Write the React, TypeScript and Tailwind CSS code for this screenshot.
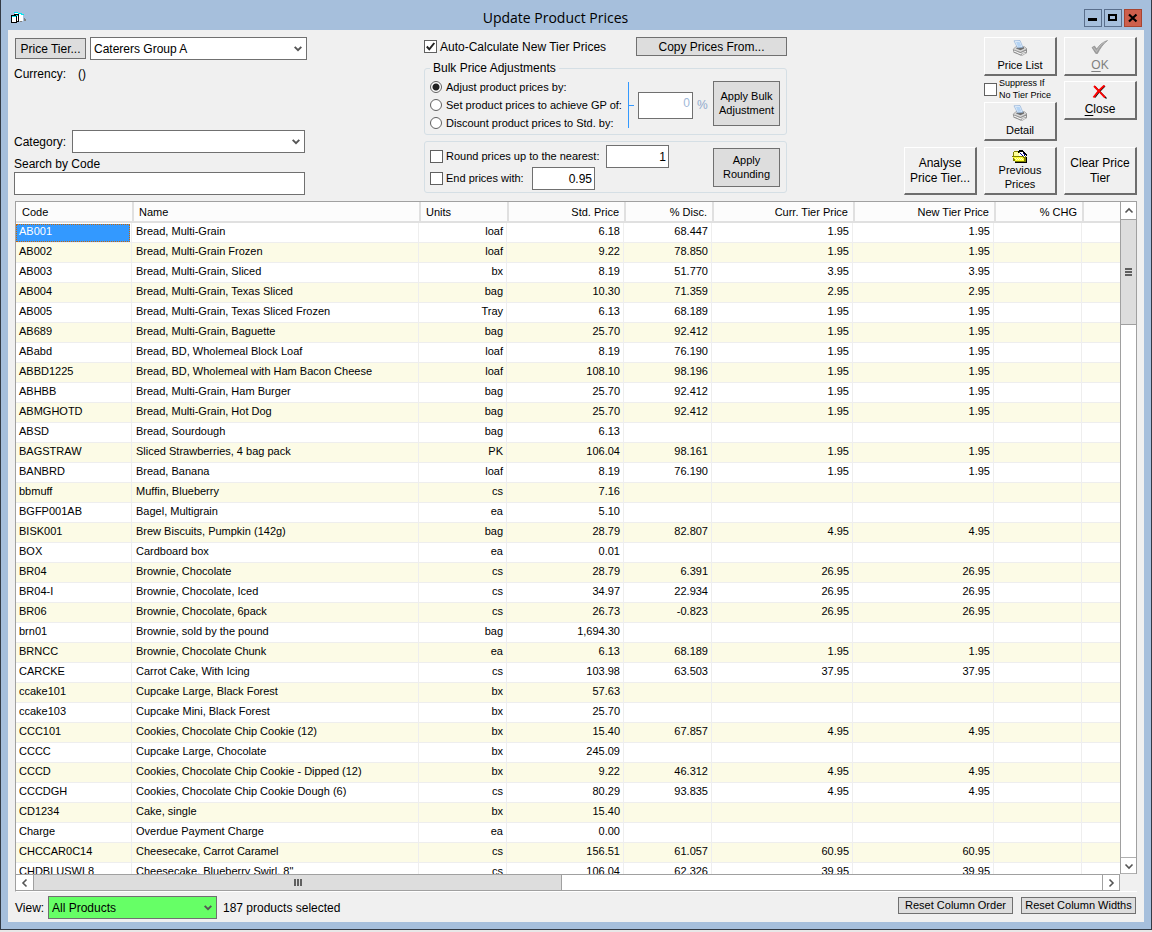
import { ReactNode, useState } from 'react';
import clsx from 'clsx';

interface Product {
  code: string;
  name: string;
  units: string;
  std: string;
  disc?: string;
  curr?: string;
  next?: string;
}

const p = (code: string, name: string, units: string, std: string, disc = '', tier = ''): Product => ({
  code, name, units, std, disc, curr: tier, next: tier,
});

const products: Product[] = [
  p('AB001', 'Bread, Multi-Grain', 'loaf', '6.18', '68.447', '1.95'),
  p('AB002', 'Bread, Multi-Grain Frozen', 'loaf', '9.22', '78.850', '1.95'),
  p('AB003', 'Bread, Multi-Grain, Sliced', 'bx', '8.19', '51.770', '3.95'),
  p('AB004', 'Bread, Multi-Grain, Texas Sliced', 'bag', '10.30', '71.359', '2.95'),
  p('AB005', 'Bread, Multi-Grain, Texas Sliced Frozen', 'Tray', '6.13', '68.189', '1.95'),
  p('AB689', 'Bread, Multi-Grain, Baguette', 'bag', '25.70', '92.412', '1.95'),
  p('ABabd', 'Bread, BD, Wholemeal Block Loaf', 'loaf', '8.19', '76.190', '1.95'),
  p('ABBD1225', 'Bread, BD, Wholemeal with Ham Bacon Cheese', 'loaf', '108.10', '98.196', '1.95'),
  p('ABHBB', 'Bread, Multi-Grain, Ham Burger', 'bag', '25.70', '92.412', '1.95'),
  p('ABMGHOTD', 'Bread, Multi-Grain, Hot Dog', 'bag', '25.70', '92.412', '1.95'),
  p('ABSD', 'Bread, Sourdough', 'bag', '6.13'),
  p('BAGSTRAW', 'Sliced Strawberries, 4 bag pack', 'PK', '106.04', '98.161', '1.95'),
  p('BANBRD', 'Bread, Banana', 'loaf', '8.19', '76.190', '1.95'),
  p('bbmuff', 'Muffin, Blueberry', 'cs', '7.16'),
  p('BGFP001AB', 'Bagel, Multigrain', 'ea', '5.10'),
  p('BISK001', 'Brew Biscuits, Pumpkin (142g)', 'bag', '28.79', '82.807', '4.95'),
  p('BOX', 'Cardboard box', 'ea', '0.01'),
  p('BR04', 'Brownie, Chocolate', 'cs', '28.79', '6.391', '26.95'),
  p('BR04-I', 'Brownie, Chocolate, Iced', 'cs', '34.97', '22.934', '26.95'),
  p('BR06', 'Brownie, Chocolate, 6pack', 'cs', '26.73', '-0.823', '26.95'),
  p('brn01', 'Brownie, sold by the pound', 'bag', '1,694.30'),
  p('BRNCC', 'Brownie, Chocolate Chunk', 'ea', '6.13', '68.189', '1.95'),
  p('CARCKE', 'Carrot Cake, With Icing', 'cs', '103.98', '63.503', '37.95'),
  p('ccake101', 'Cupcake Large, Black Forest', 'bx', '57.63'),
  p('ccake103', 'Cupcake Mini, Black Forest', 'bx', '25.70'),
  p('CCC101', 'Cookies, Chocolate Chip Cookie (12)', 'bx', '15.40', '67.857', '4.95'),
  p('CCCC', 'Cupcake Large, Chocolate', 'bx', '245.09'),
  p('CCCD', 'Cookies, Chocolate Chip Cookie - Dipped (12)', 'bx', '9.22', '46.312', '4.95'),
  p('CCCDGH', 'Cookies, Chocolate Chip Cookie Dough (6)', 'cs', '80.29', '93.835', '4.95'),
  p('CD1234', 'Cake, single', 'bx', '15.40'),
  p('Charge', 'Overdue Payment Charge', 'ea', '0.00'),
  p('CHCCAR0C14', 'Cheesecake, Carrot Caramel', 'cs', '156.51', '61.057', '60.95'),
  p('CHDBLUSWL8', 'Cheesecake, Blueberry Swirl, 8"', 'cs', '106.04', '62.326', '39.95'),
];

const columns = [
  { label: 'Code', width: 'w-[116px]' },
  { label: 'Name', width: 'w-[287px]' },
  { label: 'Units', width: 'w-[88px]' },
  { label: 'Std. Price', width: 'w-[117px]', right: true },
  { label: '% Disc.', width: 'w-[88px]', right: true },
  { label: 'Curr. Tier Price', width: 'w-[141px]', right: true },
  { label: 'New Tier Price', width: 'w-[141px]', right: true },
  { label: '% CHG', width: 'w-[88px]', right: true },
  { label: '', width: '' },
];

function PrinterIcon() {
  return (
    <svg width="16" height="16" viewBox="0 0 16 16" aria-hidden="true">
      <path d="M1 9.500 4 6.500l8.500.2 2.500 2.300v3.500L9 15.800 1.500 12.500z" fill="#8a8a8a" />
      <path d="M1 9.500 4 6.500l8.500.2L15 9l-6.500 3.300z" fill="#d8d8d8" stroke="#8a8a8a" strokeWidth=".5" />
      <path d="M4 8.600 6 6.800l5.700.2.5 1.500-3.700 1.700z" fill="#6d6d6d" />
      <path d="M2 .8 8 .5l2.800 6.700-5.300.6z" fill="#e6f1fc" stroke="#8fb0d8" strokeWidth=".7" />
      <path d="m4 2 3.500-.2 2 4.700-3.500.5z" fill="#b4d3f3" />
      <path d="M2 11 8.500 13.800l5.500-2.500" stroke="#f4f4f4" strokeWidth="1.100" fill="none" />
      <path d="m9 14 4-1.800 1.500.8-4.500 2.500z" fill="#ececec" stroke="#777" strokeWidth=".4" />
    </svg>
  );
}

function TickIcon() {
  return (
    <svg width="18" height="14" viewBox="0 0 18 14" aria-hidden="true">
      <path d="M1 7.500 3.500 6l2.200 3C8.500 5 11.500 2 16.500.5 12 4 9 8.500 6.500 13.500H4.800z" fill="#a0a0a0" stroke="#858585" strokeWidth=".6" />
      <path d="m2.500 7.500 3 4C8 7 10.500 4 14 1.800" fill="none" stroke="#c4c4c4" strokeWidth=".8" />
    </svg>
  );
}

function CrossIcon() {
  return (
    <svg width="16" height="14" viewBox="0 0 16 14" aria-hidden="true">
      <path d="M3 1.500C6 5 10 9 14.500 13.500M13 1 8 6 3 12.500" fill="none" stroke="#111" strokeWidth="1.200" />
      <path d="M2 1C5 4 9 8.500 13 12.500" fill="none" stroke="#f00" strokeWidth="1.800" />
      <path d="M12.500.5C8.500 3.500 5 7.500 1.500 12.500" fill="none" stroke="#f00" strokeWidth="2" />
    </svg>
  );
}

function FolderIcon() {
  return (
    <svg width="16" height="14" viewBox="0 0 16 14" aria-hidden="true" shapeRendering="crispEdges">
      <path d="M1 3h1V2h4v1h7v4h1v6H3v-1H1z" fill="#808000" />
      <path d="M2 3h4v1h1v3H2z" fill="#ffff99" />
      <path d="M7 4 9 2l5 4-1 2H7z" fill="#fff" />
      <path d="M6 2h1V1h4v1h1v1h1v1h1v1h1v2h-1V6h-1V5h-1V4h-1V3H7v1H6z" fill="#000" />
      <path d="M8 4h1v1h1v1h1v1h-1V6H9V5H8zM11 4h1v1h1v2h-1V5h-1z" fill="#00008b" />
      <path d="M0 7h12v1h1v4h1v1H3v-1H2v-2H1V8H0z" fill="#808000" />
      <path d="M1 8h10v1h1v3H3v-2H2V9H1z" fill="#ffff33" />
      <path d="M3 9h1v1H3zM5 9h1v1H5zM7 9h1v1H7zM9 9h1v1H9zM4 10h1v1H4zM6 10h1v1H6zM8 10h1v1H8zM10 10h1v1h-1z" fill="#ffffcc" />
      <path d="M14 8h1v6H3v-1h11z" fill="#000" />
    </svg>
  );
}

function AppIcon() {
  return (
    <svg className="shrink-0" width="17" height="14" viewBox="0 0 17 14" aria-hidden="true" shapeRendering="crispEdges">
      <path d="M5 2h5v1h3v7H8V4H5z" fill="#fff" />
      <path d="M4 1h4v1h4v1h2v1h-3V3H8V2H4z" fill="#00e5f0" />
      <path d="M14 7h1v1h1v2h-2zM10 10h2v1h-2z" fill="#808080" />
      <path d="M4.500 3.500h4v7h-4z" fill="#fff" stroke="#000" />
      <path d="M5 4h3v1H5z" fill="#00e5f0" />
      <path d="M1.500 5.500h5v6h-5z" fill="#fff" stroke="#000" />
      <path d="M1 4h5v1H1z" fill="#000" />
      <path d="M2 5h4v1H2z" fill="#00e5f0" />
    </svg>
  );
}

function Chevron({ dir }: { dir: 'up' | 'down' | 'left' | 'right' }) {
  const d = {
    up: 'M1.500 6.500 5 3l3.500 3.500',
    down: 'M1.500 3.500 5 7l3.500-3.500',
    left: 'M6.500 1.500 3 5l3.500 3.500',
    right: 'M3.500 1.500 7 5 3.500 8.500',
  }[dir];
  return (
    <svg width="10" height="10" viewBox="0 0 10 10" aria-hidden="true">
      <path d={d} fill="none" stroke="#555" strokeWidth="1.600" />
    </svg>
  );
}

function Select({ id, label, options, className }: { id: string; label: string; options: string[]; className?: string }) {
  return (
    <div className={clsx('relative h-[23px] border border-[#707070]', className)}>
      <select id={id} aria-label={label} className="block h-full w-full appearance-none bg-transparent pl-[3px] pr-4 text-xs outline-none">
        {options.map((o) => <option key={o}>{o}</option>)}
      </select>
      <svg className="pointer-events-none absolute right-1 top-2" width="8" height="6" viewBox="0 0 8 6" aria-hidden="true">
        <path d="M.7.8 4 4.200 7.300.8" fill="none" stroke="#555" strokeWidth="1.900" />
      </svg>
    </div>
  );
}

function Check({ id, checked = false }: { id: string; checked?: boolean }) {
  return (
    <span className="relative block h-[13px] w-[13px] shrink-0">
      <input id={id} type="checkbox" defaultChecked={checked} className="peer block h-full w-full appearance-none border border-[#606060] bg-white" />
      <svg className="pointer-events-none absolute inset-0 hidden peer-checked:block" width="13" height="13" viewBox="0 0 13 13" aria-hidden="true">
        <path d="M2.800 6.500 5.300 9.300 10.300 3" fill="none" stroke="#222" strokeWidth="2" />
      </svg>
    </span>
  );
}

function FlatButton({ children, className }: { children: ReactNode; className?: string }) {
  return (
    <button type="button" className={clsx('flex items-center justify-center border border-[#707070] bg-[#dddddd] text-center', className)}>
      {children}
    </button>
  );
}

function RaisedButton({ children, className, disabled }: { children: ReactNode; className?: string; disabled?: boolean }) {
  return (
    <button
      type="button"
      disabled={disabled}
      className={clsx('flex flex-col items-center border-b-2 border-l border-r-2 border-t border-b-[#6d6d6d] border-l-white border-r-[#6d6d6d] border-t-white', className)}
    >
      {children}
    </button>
  );
}

function TitleBar() {
  return (
    <header className="flex h-[30px] shrink-0 items-center px-[9px] pt-[6px]">
      <AppIcon />
      <h1 className="flex-1 text-center font-['Open_Sans','Noto_Sans',sans-serif] text-[14px] leading-6">Update Product Prices</h1>
      <div className="flex justify-end gap-[2px]">
        <button type="button" aria-label="Minimize" className="flex h-[18px] w-[18px] items-center justify-center border border-[#5a6f8c]">
          <svg width="10" height="10" viewBox="0 0 10 10"><path d="M0 5h9v3H0z" /></svg>
        </button>
        <button type="button" aria-label="Maximize" className="flex h-[18px] w-[18px] items-center justify-center border border-[#5a6f8c]">
          <svg width="10" height="10" viewBox="0 0 10 10"><path d="M1 2h7v5H1z" fill="none" stroke="#000" strokeWidth="2" /></svg>
        </button>
        <button type="button" aria-label="Close" className="flex h-[18px] w-[18px] items-center justify-center border border-[#a8442f] bg-[#cd5f4c]">
          <svg width="10" height="10" viewBox="0 0 10 10"><path d="m1 1.500 7.500 7M8.500 1.500 1 8.500" stroke="#000" strokeWidth="2.200" /></svg>
        </button>
      </div>
    </header>
  );
}

function TierPanel() {
  return (
    <div className="flex w-[293px] flex-col justify-between">
      <div>
        <div className="flex items-center gap-1 pl-px">
          <FlatButton className="h-[21px] w-[71px] shrink-0 text-xs">Price Tier...</FlatButton>
          <Select id="tier" label="Price tier" options={['Caterers Group A']} className="flex-1 bg-white" />
        </div>
        <div className="mt-[6px] flex gap-3 text-xs leading-4">
          <span>Currency:</span>
          <span>()</span>
        </div>
      </div>
      <div className="pr-[2px]">
        <div className="flex items-center gap-[6px]">
          <label htmlFor="category" className="text-xs">Category:</label>
          <Select id="category" label="Category" options={['']} className="flex-1 bg-white" />
        </div>
        <label htmlFor="search" className="mt-[3px] block text-xs leading-4">Search by Code</label>
        <input id="search" type="text" className="block h-[23px] w-full border border-[#707070] bg-white px-1 text-xs outline-none" />
      </div>
    </div>
  );
}

const modes = ['Adjust product prices by:', 'Set product prices to achieve GP of:', 'Discount product prices to Std. by:'];

function AdjustPanel() {
  const [mode, setMode] = useState(0);
  return (
    <div className="w-[363px]">
      <div className="flex h-[19px] items-center gap-[3px]">
        <Check id="auto" checked />
        <label htmlFor="auto" className="flex-1 text-xs">Auto-Calculate New Tier Prices</label>
        <FlatButton className="h-[19px] w-[151px] text-xs">Copy Prices From...</FlatButton>
      </div>

      <fieldset className="mt-1 flex h-[75px] items-center rounded-[3px] border border-[#d5dfe5] px-[5px]">
        <legend className="px-[3px] text-xs leading-4">Bulk Price Adjustments</legend>
        <div className="w-[198px] shrink-0">
          {modes.map((m, i) => (
            <label key={m} className="flex h-[18px] items-center gap-1 whitespace-nowrap text-[11px]">
              <input
                type="radio"
                name="mode"
                checked={mode === i}
                onChange={() => setMode(i)}
                className="block h-3 w-3 shrink-0 appearance-none rounded-full border border-[#606060] bg-white checked:bg-[radial-gradient(circle,#222_3px,#fff_4px)]"
              />
              {m}
            </label>
          ))}
        </div>
        <div className="flex h-[46px] w-[10px] shrink-0 items-center border-l border-[#3399ff] pr-1">
          <div className="h-px w-full bg-[#3399ff]" />
        </div>
        <input type="text" aria-label="Adjustment" defaultValue="0" className="block h-[27px] w-[55px] border border-[#707070] bg-white pb-1 pr-[2px] text-right text-xs text-[#a0b8d8] outline-none" />
        <span className="w-5 pl-1 text-xs text-[#8fa9cc]">%</span>
        <FlatButton className="mb-1 h-[45px] w-[67px] shrink-0 text-[11px] leading-[14px]">Apply Bulk Adjustment</FlatButton>
      </fieldset>

      <fieldset className="mt-[6px] flex h-[52px] items-center justify-between rounded-[3px] border border-[#d5dfe5] pl-[5px] pr-[6px]">
        <div className="pt-px text-[11px]">
          <div className="flex h-[22px] items-center">
            <Check id="round" />
            <label htmlFor="round" className="w-[163px] pl-[3px]">Round prices up to the nearest:</label>
            <input type="text" aria-label="Nearest" defaultValue="1" className="block h-[23px] w-[63px] border border-[#707070] bg-white pr-[2px] text-right text-xs outline-none" />
          </div>
          <div className="flex h-[22px] items-center">
            <Check id="end" />
            <label htmlFor="end" className="w-[89px] pl-[3px]">End prices with:</label>
            <input type="text" aria-label="Ending" defaultValue="0.95" className="block h-[23px] w-[63px] border border-[#707070] bg-white pr-[2px] text-right text-xs outline-none" />
          </div>
        </div>
        <FlatButton className="h-[39px] w-[67px] px-1 text-[11px] leading-[14px]">Apply Rounding</FlatButton>
      </fieldset>
    </div>
  );
}

function ActionPanel() {
  return (
    <div className="grid grid-cols-[73px_73px_73px] content-between gap-x-[7px]">
      <div className="col-start-2 row-start-1 flex flex-col">
        <RaisedButton className="h-[39px] pt-[2px] text-[11px] leading-[14px]">
          <PrinterIcon />
          <span className="pt-[2px]">Price List</span>
        </RaisedButton>
        <div className="flex h-[26px] items-center gap-[2px]">
          <Check id="suppress" />
          <label htmlFor="suppress" className="whitespace-nowrap text-[9px] leading-3">Suppress If<br />No Tier Price</label>
        </div>
        <RaisedButton className="h-[39px] pt-[2px] text-[11px] leading-[14px]">
          <PrinterIcon />
          <span className="pt-[2px]">Detail</span>
        </RaisedButton>
      </div>
      <div className="col-start-3 row-start-1 flex flex-col gap-[5px]">
        <RaisedButton disabled className="h-[39px] pt-[2px] text-xs leading-4 text-[#808080]">
          <TickIcon />
          <span className="pt-[3px]"><u className="underline-offset-2">O</u>K</span>
        </RaisedButton>
        <RaisedButton className="h-[39px] pt-[3px] text-xs leading-4">
          <CrossIcon />
          <span className="pt-[2px]"><u className="underline-offset-2">C</u>lose</span>
        </RaisedButton>
      </div>
      <RaisedButton className="col-start-1 row-start-2 h-12 justify-center text-xs leading-[15px]">
        <span>Analyse</span>
        <span>Price Tier...</span>
      </RaisedButton>
      <RaisedButton className="col-start-2 row-start-2 h-12 pt-px text-[11px] leading-[14px]">
        <FolderIcon />
        <span>Previous</span>
        <span>Prices</span>
      </RaisedButton>
      <RaisedButton className="col-start-3 row-start-2 h-12 justify-center text-xs leading-[15px]">
        <span>Clear Price</span>
        <span>Tier</span>
      </RaisedButton>
    </div>
  );
}

function ProductTable() {
  return (
    <table className="w-full table-fixed border-separate border-spacing-0 text-[11px] leading-[14px]">
      <thead>
        <tr className="h-[21px] bg-[#fcfcfc]">
          {columns.map((c, i) => (
            <th
              key={i}
              className={clsx(
                'overflow-hidden whitespace-nowrap border-b-2 border-[#e0e0e0] p-0 font-normal',
                c.width,
                i > 0 && 'border-l-2',
                c.right ? 'pr-[5px] text-right' : 'text-left',
                !c.right && (i > 0 ? 'pl-[5px]' : 'pl-[6px]'),
              )}
            >
              {c.label}
            </th>
          ))}
        </tr>
      </thead>
      <tbody>
        {products.map((r, i) => (
          <tr key={r.code} className={clsx('h-5', i % 2 ? 'bg-[#fcfbe6]' : 'bg-white')}>
            {[r.code, r.name, r.units, r.std, r.disc, r.curr, r.next, '', ''].map((v, c) => (
              <td
                key={c}
                className={clsx(
                  'overflow-hidden whitespace-nowrap border-b border-[#eeeeee] p-0',
                  c < 8 && 'border-r',
                  c > 1 && 'pr-[3px] text-right',
                )}
              >
                <div
                  className={clsx(
                    'h-[18px]',
                    c === 0 && 'pl-[3px]',
                    c === 1 && 'pl-1',
                    i === 0 && c === 0 && 'mr-px bg-[#3399ff] text-white outline-1 -outline-offset-1 outline-dotted outline-[#cc6600]',
                  )}
                >
                  {v}
                </div>
              </td>
            ))}
          </tr>
        ))}
      </tbody>
    </table>
  );
}

function VerticalScroll() {
  return (
    <div className="flex w-[17px] shrink-0 flex-col border-x border-[#a0a0a0] bg-white">
      <button type="button" aria-label="Scroll up" className="flex h-[17px] items-center justify-center"><Chevron dir="up" /></button>
      <div className="flex h-[106px] flex-col items-center justify-center gap-px border-y border-[#a0a0a0] bg-[#dddddd]">
        <div className="h-[2px] w-[7px] bg-[#606060]" />
        <div className="h-[2px] w-[7px] bg-[#606060]" />
        <div className="h-[2px] w-[7px] bg-[#606060]" />
      </div>
      <button type="button" aria-label="Scroll down" className="mt-auto flex h-[17px] items-center justify-center border-y border-[#b0b0b0]"><Chevron dir="down" /></button>
    </div>
  );
}

function HorizontalScroll() {
  return (
    <div className="mr-[17px] flex h-[17px] shrink-0 border-y border-r border-[#a0a0a0] bg-white">
      <button type="button" aria-label="Scroll left" className="flex w-[17px] items-center justify-center"><Chevron dir="left" /></button>
      <div className="flex w-[48%] items-center justify-center gap-px border-x border-[#a0a0a0] bg-[#dddddd]">
        <div className="h-[7px] w-[2px] bg-[#606060]" />
        <div className="h-[7px] w-[2px] bg-[#606060]" />
        <div className="h-[7px] w-[2px] bg-[#606060]" />
      </div>
      <button type="button" aria-label="Scroll right" className="ml-auto flex w-[17px] items-center justify-center border-l border-[#a0a0a0]"><Chevron dir="right" /></button>
    </div>
  );
}

export default function App() {
  return (
    <div className="h-screen bg-[#e8e8e8] pb-[2px] font-['Liberation_Sans',Arial,sans-serif] text-black">
      <div className="flex h-full flex-col border-x border-b border-[#333a45] bg-[#a6bfdc]">
        <TitleBar />
        <main className="mx-[7px] mb-[7px] flex min-h-0 flex-1 flex-col bg-[#f0f0f0] pl-[6px] pr-[7px]">
          <section className="flex h-[165px] shrink-0 justify-between pt-[7px]">
            <TierPanel />
            <AdjustPanel />
            <ActionPanel />
          </section>

          <section className="ml-px mt-[6px] flex min-h-0 flex-1 flex-col border-b border-l border-t border-b-white border-l-[#a0a0a0] border-t-[#a0a0a0]">
            <div className="flex min-h-0 flex-1">
              <div className="min-w-0 flex-1 overflow-hidden bg-white">
                <ProductTable />
              </div>
              <VerticalScroll />
            </div>
            <HorizontalScroll />
          </section>

          <footer className="flex h-[30px] shrink-0 items-center pl-px pt-px text-xs">
            <label htmlFor="view" className="w-[33px]">View:</label>
            <Select id="view" label="View" options={['All Products']} className="w-[169px] bg-[#66ff66]" />
            <span className="flex-1 pl-[6px]">187 products selected</span>
            <FlatButton className="mb-1 mr-2 h-[17px] w-[115px] text-[11px]">Reset Column Order</FlatButton>
            <FlatButton className="mb-1 mr-px h-[17px] w-[115px] text-[11px]">Reset Column Widths</FlatButton>
          </footer>
        </main>
      </div>
    </div>
  );
}
